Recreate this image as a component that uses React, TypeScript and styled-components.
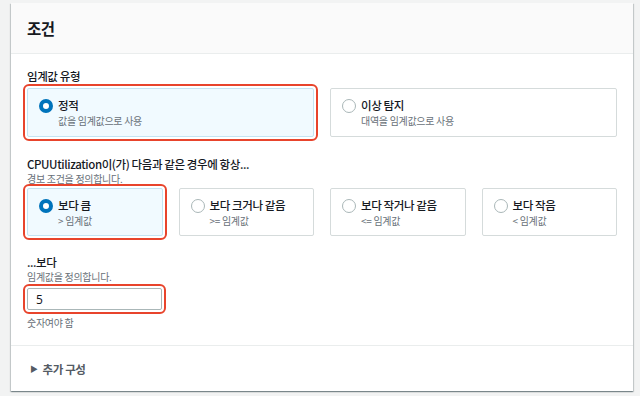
import React, { useState } from 'react';
import styled, { createGlobalStyle } from 'styled-components';

const GlobalStyle = createGlobalStyle`
  html, body {
    margin: 0;
    padding: 0;
    background: #f2f3f3;
    font-family: "Noto Sans CJK KR", "Noto Sans", sans-serif;
    color: #16191f;
  }
`;

const Page = styled.div`
  padding: 3px 7px 5px 11px;
`;

const Card = styled.section`
  width: 622px;
  background: #fff;
  box-shadow: 0 1px 1px 0 rgba(0, 28, 36, 0.3), 1px 1px 1px 0 rgba(0, 28, 36, 0.15),
    -1px 1px 1px 0 rgba(0, 28, 36, 0.15);
`;

const Header = styled.header`
  height: 50px;
  display: flex;
  align-items: center;
  padding: 0 16px;
  background: #fafafa;
  border-bottom: 1px solid #eaeded;
`;

const Title = styled.h2`
  margin: 0;
  font-size: 15.5px;
  font-weight: 700;
  letter-spacing: -0.6px;
`;

const Body = styled.div`
  padding: 15px 16px 16px;
  display: flex;
  flex-direction: column;
`;

const Field = styled.div<{ $gap?: number }>`
  display: flex;
  flex-direction: column;
  margin-bottom: ${(p) => p.$gap ?? 20}px;
`;

const Label = styled.div`
  font-size: 11.5px;
  font-weight: 500;
  line-height: 15px;
  letter-spacing: -0.4px;
`;

const Description = styled.div<{ $space?: number }>`
  font-size: 10px;
  color: #687078;
  line-height: 13px;
  letter-spacing: -0.3px;
  margin-top: ${(p) => p.$space ?? 0}px;
`;

const Tiles = styled.div<{ $cols: number; $space: number }>`
  display: grid;
  grid-template-columns: repeat(${(p) => p.$cols}, 1fr);
  gap: 16px;
  margin-top: ${(p) => p.$space}px;
`;

const Tile = styled.label<{ $checked: boolean; $flagged?: boolean; $height: number }>`
  display: flex;
  align-items: flex-start;
  gap: 5px;
  height: ${(p) => p.$height}px;
  box-sizing: border-box;
  padding: 9px 11px;
  border: 1px solid ${(p) => (p.$checked ? '#c4e4f3' : '#d5dbdb')};
  background: ${(p) => (p.$checked ? '#f1faff' : '#fff')};
  border-radius: 2px;
  cursor: pointer;
  outline: ${(p) => (p.$flagged ? '2px solid #e8442c' : 'none')};
  outline-offset: 2px;
`;

const Radio = styled.span<{ $checked: boolean }>`
  flex: none;
  width: 14px;
  height: 14px;
  margin-top: 1px;
  box-sizing: border-box;
  border-radius: 50%;
  border: ${(p) => (p.$checked ? '4px solid #0073bb' : '1.5px solid #aab7b8')};
  background: #fff;
`;

const TileText = styled.div`
  display: flex;
  flex-direction: column;
  white-space: nowrap;
`;

const TileLabel = styled.span`
  font-size: 11.5px;
  font-weight: 500;
  line-height: 15px;
  letter-spacing: -0.4px;
`;

const TileDesc = styled.span`
  font-size: 10px;
  color: #687078;
  line-height: 15px;
  letter-spacing: -0.3px;
`;

const Input = styled.input`
  width: 135px;
  height: 22px;
  box-sizing: border-box;
  margin: 5px 0 0;
  padding: 0 8px;
  border: 1px solid #aab7b8;
  border-radius: 2px;
  font-family: "Noto Sans", sans-serif;
  font-size: 12px;
  color: #16191f;
  outline: 2px solid #e8442c;
  outline-offset: 2px;
`;

const Footer = styled.div`
  border-top: 1px solid #eaeded;
  height: 45px;
  display: flex;
  align-items: center;
  padding: 0 19px;
  gap: 5px;
  font-size: 11.5px;
  font-weight: 700;
  letter-spacing: -0.4px;
  color: #545b64;
`;

const Caret = styled.span`
  font-size: 8px;
  color: #545b64;
`;

type Option = { id: string; label: string; desc: string };

const thresholdTypes: Option[] = [
  { id: 'static', label: '정적', desc: '값을 임계값으로 사용' },
  { id: 'anomaly', label: '이상 탐지', desc: '대역을 임계값으로 사용' },
];

const conditions: Option[] = [
  { id: 'gt', label: '보다 큼', desc: '> 임계값' },
  { id: 'gte', label: '보다 크거나 같음', desc: '>= 임계값' },
  { id: 'lte', label: '보다 작거나 같음', desc: '<= 임계값' },
  { id: 'lt', label: '보다 작음', desc: '< 임계값' },
];

function TileGroup({
  options,
  value,
  onChange,
  space,
  height,
}: {
  options: Option[];
  value: string;
  onChange: (id: string) => void;
  space: number;
  height: number;
}) {
  return (
    <Tiles $cols={options.length} $space={space}>
      {options.map((o) => (
        <Tile
          key={o.id}
          $height={height}
          $checked={o.id === value}
          $flagged={o.id === value}
          onClick={() => onChange(o.id)}
        >
          <Radio $checked={o.id === value} />
          <TileText>
            <TileLabel>{o.label}</TileLabel>
            <TileDesc>{o.desc}</TileDesc>
          </TileText>
        </Tile>
      ))}
    </Tiles>
  );
}

export default function App() {
  const [type, setType] = useState('static');
  const [cond, setCond] = useState('gt');
  const [threshold, setThreshold] = useState('5');

  return (
    <Page>
      <GlobalStyle />
      <Card>
        <Header>
          <Title>조건</Title>
        </Header>
        <Body>
          <Field>
            <Label>임계값 유형</Label>
            <TileGroup
              options={thresholdTypes}
              value={type}
              onChange={setType}
              space={4}
              height={49}
            />
          </Field>
          <Field $gap={19}>
            <Label>CPUUtilization이(가) 다음과 같은 경우에 항상...</Label>
            <Description>경보 조건을 정의합니다.</Description>
            <TileGroup
              options={conditions}
              value={cond}
              onChange={setCond}
              space={3}
              height={48}
            />
          </Field>
          <Field $gap={0}>
            <Label>...보다</Label>
            <Description>임계값을 정의합니다.</Description>
            <Input value={threshold} onChange={(e) => setThreshold(e.target.value)} />
            <Description $space={6}>숫자여야 함</Description>
          </Field>
        </Body>
        <Footer>
          <Caret>▶</Caret>
          추가 구성
        </Footer>
      </Card>
    </Page>
  );
}
